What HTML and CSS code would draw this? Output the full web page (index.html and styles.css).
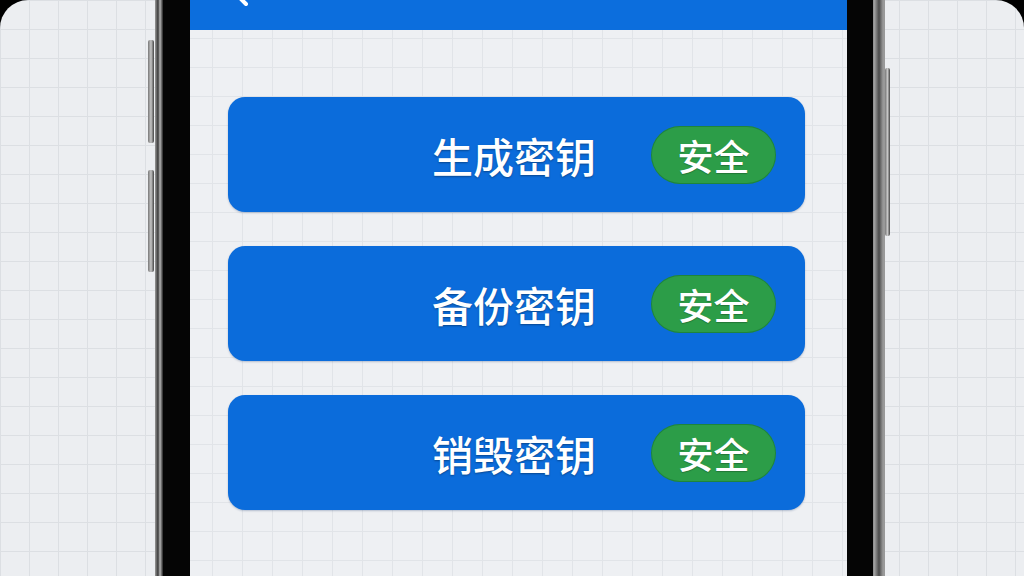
FILE: index.html
```html
<!DOCTYPE html>
<html lang="zh-CN">
<head>
    <meta charset="UTF-8">
    <meta name="viewport" content="width=device-width, initial-scale=1.0">
    <title>密钥管理</title>
    <link rel="stylesheet" href="styles.css">
</head>
<body>

    <div class="stage">
        <div class="backdrop">
            <div class="phone">
                <span class="side-btn left-top"></span>
                <span class="side-btn left-bottom"></span>
                <span class="side-btn right-power"></span>
                <div class="bezel">
                    <div class="screen">
                        <header class="app-header">
                            <svg class="back-icon" viewBox="0 0 24 40" width="24" height="40">
                                <polyline points="20,3 3,20 20,37" fill="none" stroke="#fff" stroke-width="4" stroke-linecap="round" stroke-linejoin="round"/>
                            </svg>
                        </header>

                        <div class="key-list">
                            <button type="button" class="key-btn">
                                <span class="key-label">生成密钥</span>
                                <span class="badge">安全</span>
                            </button>
                            <button type="button" class="key-btn">
                                <span class="key-label">备份密钥</span>
                                <span class="badge">安全</span>
                            </button>
                            <button type="button" class="key-btn">
                                <span class="key-label">销毁密钥</span>
                                <span class="badge">安全</span>
                            </button>
                        </div>
                    </div>
                </div>
            </div>
        </div>
    </div>

</body>
</html>
```

FILE: styles.css
```css
body {
    margin: 0;
    background-color: #000;
    font-family: "Noto Sans CJK SC", "Noto Sans", sans-serif;
}

.stage {
    width: 1024px;
    height: 576px;
    overflow: hidden;
    background-color: #000;
}

.backdrop {
    display: flow-root;
    height: 100%;
    border-radius: 28px 28px 0 0;
    background-color: #eceef1;
    background-image:
        linear-gradient(to right, #dcdfe3 1px, transparent 1px),
        linear-gradient(to bottom, #dcdfe3 1px, transparent 1px);
    background-size: 29px 29px;
    background-position: 0 0;
    padding-left: 155px;
    box-sizing: border-box;
}

.phone {
    position: relative;
    width: 730px;
    height: 900px;
    margin-top: -150px;
    padding: 8px 12px 8px 8px;
    box-sizing: border-box;
    border-radius: 60px;
    background: linear-gradient(to right, #9a9a9a 0, #3a3a3a 3px, #b8b8b8 5px, #222 8px, #111 50%, #222 716px, #a8a8a8 719px, #4a4a4a 724px, #999 728px);
}

.side-btn {
    position: absolute;
    width: 6px;
    border-radius: 2px;
    background: linear-gradient(to right, #777, #c6c6c6, #444);
}

.left-top {
    left: -7px;
    top: 190px;
    height: 103px;
}

.left-bottom {
    left: -7px;
    top: 320px;
    height: 102px;
}

.right-power {
    right: -5px;
    top: 218px;
    height: 168px;
    width: 5px;
}

.bezel {
    height: 100%;
    padding: 26px 26px 26px 27px;
    box-sizing: border-box;
    background-color: #050505;
    border-radius: 52px;
}

.screen {
    height: 100%;
    overflow: hidden;
    border-radius: 34px;
    background-color: #eef0f3;
    background-image:
        linear-gradient(to right, #e1e4e8 1px, transparent 1px),
        linear-gradient(to bottom, #e1e4e8 1px, transparent 1px);
    background-size: 30px 29px;
    background-position: 22px 9px;
}

.app-header {
    height: 146px;
    background-color: #0c6edd;
    display: flex;
    align-items: flex-end;
    padding: 0 0 23px 36px;
    box-sizing: border-box;
}

.back-icon {
    display: block;
}

.key-list {
    display: flex;
    flex-direction: column;
    gap: 34px;
    padding: 67px 42px 0 38px;
}

.key-btn {
    display: flex;
    align-items: center;
    justify-content: flex-end;
    gap: 55px;
    height: 115px;
    padding: 0 29px 0 0;
    border: none;
    border-radius: 17px;
    background-color: #0b6cdb;
    box-shadow: 0 1px 2px rgba(0, 40, 100, 0.25);
    font-family: inherit;
    cursor: pointer;
}

.key-label {
    color: #fff;
    font-size: 41px;
    font-weight: 500;
    text-shadow: 0 1px 2px rgba(0, 0, 0, 0.35);
}

.badge {
    display: flex;
    align-items: center;
    justify-content: center;
    width: 125px;
    height: 58px;
    border-radius: 29px;
    background-color: #2c9d48;
    box-shadow: inset 0 0 0 1px rgba(0, 80, 30, 0.3);
    color: #fff;
    font-size: 36px;
    font-weight: 500;
    text-shadow: 0 1px 1px rgba(0, 0, 0, 0.25);
}
```
